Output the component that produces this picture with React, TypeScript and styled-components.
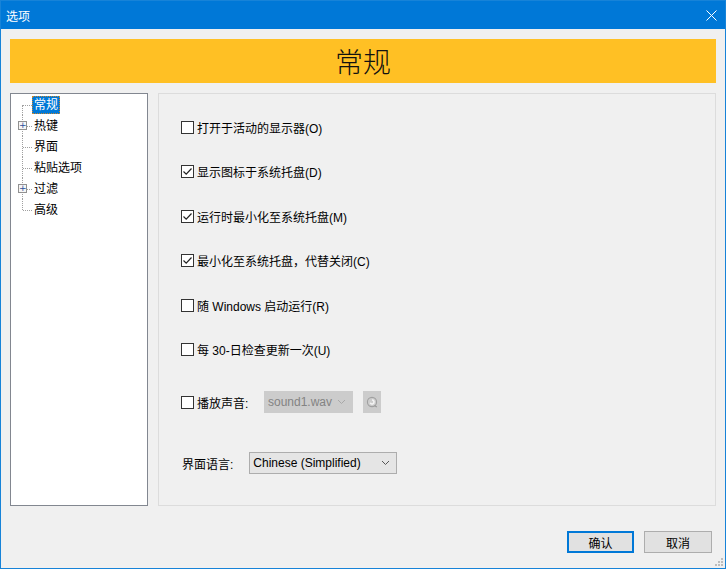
import styled, { createGlobalStyle } from "styled-components";

const GlobalStyle = createGlobalStyle`
  html, body {
    margin: 0;
    padding: 0;
    background: #f0f0f0;
  }
  body {
    font-family: "Liberation Sans", "Noto Sans CJK SC", sans-serif;
    font-size: 12px;
    color: #000;
  }
`;

const treeItems = [
  { label: "常规", expandable: false, selected: true },
  { label: "热键", expandable: true },
  { label: "界面", expandable: false },
  { label: "粘贴选项", expandable: false },
  { label: "过滤", expandable: true },
  { label: "高级", expandable: false },
];

const options = [
  { label: "打开于活动的显示器(O)", checked: false },
  { label: "显示图标于系统托盘(D)", checked: true },
  { label: "运行时最小化至系统托盘(M)", checked: true },
  { label: "最小化至系统托盘，代替关闭(C)", checked: true },
  { label: "随 Windows 启动运行(R)", checked: false },
  { label: "每 30-日检查更新一次(U)", checked: false },
];

function Check({ checked }: { checked: boolean }) {
  return (
    <Box>
      {checked && (
        <svg width="11" height="11" viewBox="0 0 11 11">
          <path d="M1.5 5.5 L4.2 8.2 L9.5 2.5" fill="none" stroke="#222" strokeWidth="1.2" />
        </svg>
      )}
    </Box>
  );
}

function Chevron({ color }: { color: string }) {
  return (
    <svg width="9" height="6" viewBox="0 0 9 6">
      <path d="M1 1 L4.5 4.5 L8 1" fill="none" stroke={color} strokeWidth="1" />
    </svg>
  );
}

function App() {
  return (
    <>
      <GlobalStyle />
      <Window>
        <TitleBar>
          <span>选项</span>
          <svg width="11" height="11" viewBox="0 0 11 11">
            <path d="M0.5 0.5 L10.5 10.5 M10.5 0.5 L0.5 10.5" stroke="#fff" strokeWidth="1" />
          </svg>
        </TitleBar>
        <Body>
          <Banner>常规</Banner>
          <Panels>
            <Tree>
              {treeItems.map((item, i) => (
                <TreeRow key={item.label}>
                  <Gutter $first={i === 0} $last={i === treeItems.length - 1}>
                    {item.expandable && <Expander>+</Expander>}
                  </Gutter>
                  <TreeLabel $selected={!!item.selected}>{item.label}</TreeLabel>
                </TreeRow>
              ))}
            </Tree>
            <Settings>
              <OptionList>
                {options.map((o) => (
                  <OptionRow key={o.label}>
                    <Check checked={o.checked} />
                    <span>{o.label}</span>
                  </OptionRow>
                ))}
              </OptionList>
              <SoundRow>
                <Check checked={false} />
                <SoundLabel>播放声音:</SoundLabel>
                <Combo $disabled $width={89}>
                  <span>sound1.wav</span>
                  <Chevron color="#a8a8a8" />
                </Combo>
                <PlayButton>
                  <svg width="12" height="12" viewBox="0 0 12 12">
                    <circle cx="6" cy="6" r="4.6" fill="none" stroke="#a0a0a0" strokeWidth="1.1" />
                    <path d="M6 4 A2 2 0 1 1 4.2 6.8" fill="none" stroke="#f4f4f4" strokeWidth="1.6" />
                    <path d="M8.5 9.5 L10.8 11" stroke="#9a9a9a" strokeWidth="1.2" />
                  </svg>
                </PlayButton>
              </SoundRow>
              <LanguageRow>
                <span>界面语言:</span>
                <Combo $width={148}>
                  <span>Chinese (Simplified)</span>
                  <Chevron color="#555" />
                </Combo>
              </LanguageRow>
            </Settings>
          </Panels>
          <Footer>
            <Button $primary>确认</Button>
            <Button>取消</Button>
          </Footer>
          <Grip>
            <svg width="10" height="10" viewBox="0 0 10 10">
              <rect x="7" y="1" width="2" height="2" fill="#bdbdbd" />
              <rect x="4" y="4" width="2" height="2" fill="#bdbdbd" />
              <rect x="7" y="4" width="2" height="2" fill="#bdbdbd" />
              <rect x="1" y="7" width="2" height="2" fill="#bdbdbd" />
              <rect x="4" y="7" width="2" height="2" fill="#bdbdbd" />
              <rect x="7" y="7" width="2" height="2" fill="#bdbdbd" />
            </svg>
          </Grip>
        </Body>
      </Window>
    </>
  );
}

const Window = styled.div`
  width: 726px;
  height: 569px;
  box-sizing: border-box;
  border: 1px solid #1783d8;
  display: flex;
  flex-direction: column;
  background: #f0f0f0;
  overflow: hidden;
`;

const TitleBar = styled.div`
  height: 28px;
  flex: none;
  background: #0078d7;
  color: #fff;
  display: flex;
  align-items: center;
  justify-content: space-between;
  padding: 0 8px 0 5px;
  font-size: 12px;
`;

const Body = styled.div`
  flex: 1;
  position: relative;
  display: flex;
  flex-direction: column;
  padding: 10px 9px 0 9px;
`;

const Banner = styled.div`
  height: 44px;
  flex: none;
  background: #ffc024;
  display: flex;
  align-items: center;
  justify-content: center;
  font-family: "Noto Sans CJK SC", sans-serif;
  font-size: 28px;
  font-weight: 300;
  color: #111;
`;

const Panels = styled.div`
  margin-top: 10px;
  height: 413px;
  flex: none;
  display: flex;
  gap: 10px;
`;

const Tree = styled.div`
  width: 138px;
  box-sizing: border-box;
  border: 1px solid #828790;
  background: #fff;
  display: flex;
  flex-direction: column;
`;

const TreeRow = styled.div`
  height: 21px;
  display: flex;
  align-items: center;
`;

const Gutter = styled.div<{ $first: boolean; $last: boolean }>`
  position: relative;
  width: 21px;
  height: 100%;
  flex: none;

  &::before {
    content: "";
    position: absolute;
    left: 11px;
    top: ${({ $first }) => ($first ? "50%" : "0")};
    bottom: ${({ $last }) => ($last ? "50%" : "0")};
    border-left: 1px dotted #a0a0a0;
  }

  &::after {
    content: "";
    position: absolute;
    left: 12px;
    right: 0;
    top: 50%;
    border-top: 1px dotted #a0a0a0;
  }
`;

const Expander = styled.span`
  position: absolute;
  z-index: 1;
  left: 7px;
  top: 6px;
  width: 9px;
  height: 9px;
  box-sizing: border-box;
  border: 1px solid #919191;
  background: #f6f6f6;
  color: #2a4f9a;
  font-family: "DejaVu Sans", sans-serif;
  font-size: 9px;
  line-height: 7px;
  text-align: center;
`;

const TreeLabel = styled.span<{ $selected: boolean }>`
  padding: 0 1px;
  line-height: 16px;
  border: 1px dotted ${({ $selected }) => ($selected ? "#c9872e" : "transparent")};
  background: ${({ $selected }) => ($selected ? "#0078d7" : "transparent")};
  color: ${({ $selected }) => ($selected ? "#fff" : "#000")};
`;

const Settings = styled.div`
  flex: 1;
  box-sizing: border-box;
  border: 1px solid #dcdcdc;
  padding: 22px 0 0 22px;
  display: flex;
  flex-direction: column;
`;

const OptionList = styled.div`
  display: flex;
  flex-direction: column;
  gap: 22.5px;
`;

const OptionRow = styled.label`
  height: 22px;
  display: flex;
  align-items: center;
  gap: 3px;
`;

const Box = styled.span`
  width: 13px;
  height: 13px;
  flex: none;
  box-sizing: border-box;
  border: 1px solid #333;
  background: #fff;
  display: inline-flex;
  align-items: center;
  justify-content: center;
`;

const SoundRow = styled.div`
  margin-top: 30.5px;
  height: 22px;
  display: flex;
  align-items: center;
`;

const SoundLabel = styled.span`
  margin-left: 3px;
  width: 67px;
`;

const Combo = styled.div<{ $disabled?: boolean; $width: number }>`
  width: ${({ $width }) => $width}px;
  height: 22px;
  box-sizing: border-box;
  border: 1px solid ${({ $disabled }) => ($disabled ? "#cccccc" : "#adadad")};
  background: ${({ $disabled }) => ($disabled ? "#cccccc" : "#e5e5e5")};
  color: ${({ $disabled }) => ($disabled ? "#838383" : "#000")};
  font-size: 12px;
  display: flex;
  align-items: center;
  justify-content: space-between;
  padding: 0 6px 0 3px;
`;

const PlayButton = styled.div`
  margin-left: 10px;
  width: 18px;
  height: 22px;
  background: #cccccc;
  display: flex;
  align-items: center;
  justify-content: center;
`;

const LanguageRow = styled.div`
  margin-top: 39px;
  height: 22px;
  display: flex;
  align-items: center;
  gap: 16px;
  margin-left: 1px;
`;

const Footer = styled.div`
  margin-top: 25px;
  display: flex;
  justify-content: flex-end;
  gap: 10px;
  padding-right: 4px;
`;

const Button = styled.button<{ $primary?: boolean }>`
  width: ${({ $primary }) => ($primary ? 67 : 68)}px;
  height: 22px;
  box-sizing: border-box;
  border: ${({ $primary }) => ($primary ? "2px solid #0078d7" : "1px solid #adadad")};
  background: #e1e1e1;
  font-family: "Noto Sans CJK SC", sans-serif;
  font-size: 12px;
  color: #000;
  padding: 0;
`;

const Grip = styled.div`
  position: absolute;
  right: 1px;
  bottom: 1px;
  line-height: 0;
`;

export default App;
